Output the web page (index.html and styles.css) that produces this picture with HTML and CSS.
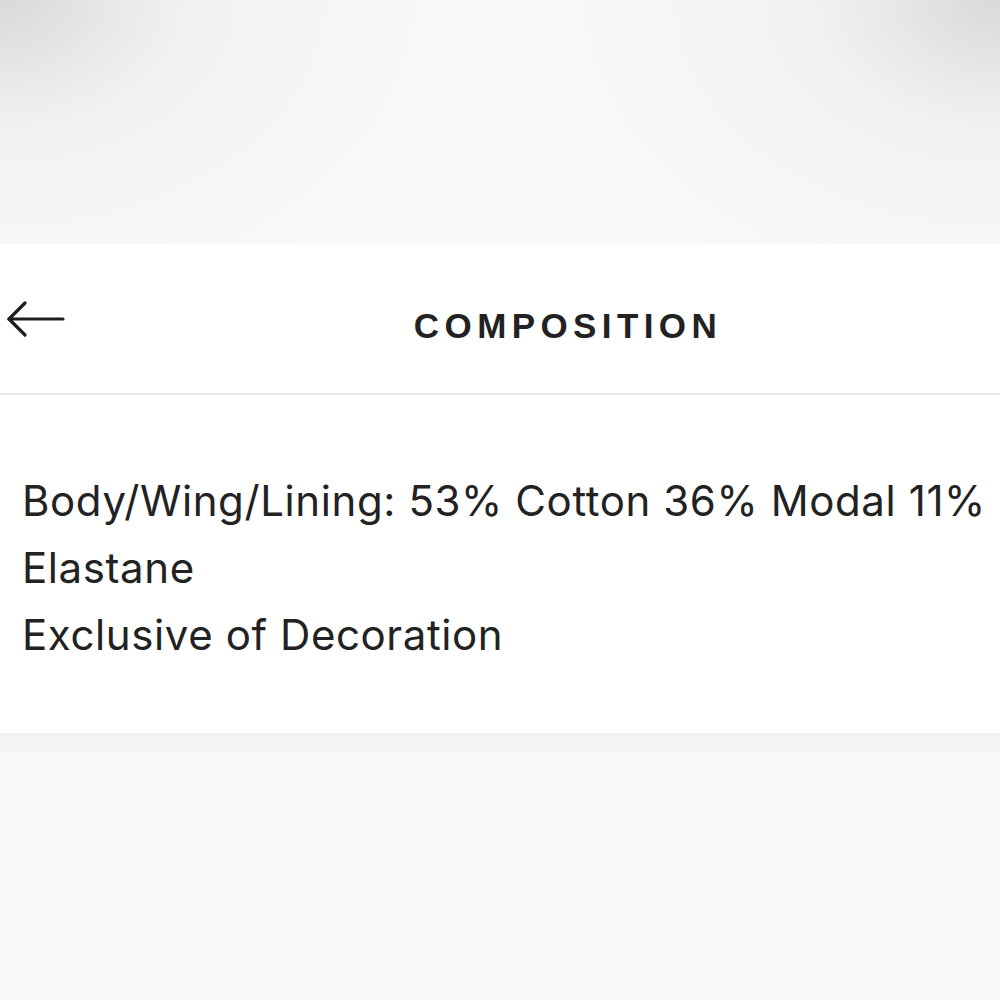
FILE: index.html
```html
<!DOCTYPE html>
<html lang="en">
<head>
<meta charset="utf-8">
<title>Composition</title>
<link rel="stylesheet" href="styles.css">
</head>
<body>
<div class="top-backdrop"></div>
<section class="sheet">
  <header class="sheet-header">
    <button class="back-btn" aria-label="Back">
      <svg width="60" height="40" viewBox="0 0 60 40" fill="none" stroke="#1e1e1e" stroke-width="3.2" stroke-linecap="round" stroke-linejoin="round">
        <path d="M2 20 H56"/>
        <path d="M18 4 L2 20 L18 36"/>
      </svg>
    </button>
    <h1 class="title">COMPOSITION</h1>
  </header>
  <div class="sheet-body">
    <p class="line">Body/Wing/Lining: 53% Cotton 36% Modal 11% Elastane</p>
    <p class="line">Exclusive of Decoration</p>
  </div>
</section>
<div class="bottom-shadow"></div>
<div class="bottom-backdrop"></div>
</body>
</html>
```

FILE: styles.css
```css
html, body {
  margin: 0;
  padding: 0;
}
body {
  width: 1000px;
  height: 1000px;
  overflow: hidden;
  background: #f9f9f9;
  font-family: Inter, "Liberation Sans", sans-serif;
  display: flex;
  flex-direction: column;
}
.top-backdrop {
  height: 244px;
  flex: none;
  background:
    radial-gradient(ellipse 460px 320px at 0 0, #d9d9d9 0%, rgba(238,238,238,0.7) 40%, rgba(249,249,249,0) 100%),
    radial-gradient(ellipse 460px 320px at 100% 0, #d9d9d9 0%, rgba(238,238,238,0.7) 40%, rgba(249,249,249,0) 100%),
    #f9f9f9;
}
.sheet {
  background: #ffffff;
  flex: none;
}
.sheet-header {
  height: 149px;
  border-bottom: 2px solid #e7e7e7;
  display: flex;
  align-items: center;
  justify-content: center;
  position: relative;
}
.back-btn {
  position: absolute;
  left: 7px;
  top: 55px;
  padding: 0;
  margin: 0;
  border: 0;
  background: transparent;
  width: 60px;
  height: 40px;
  display: block;
}
.back-btn svg {
  display: block;
}
.title {
  margin: 0;
  padding-top: 14px;
  padding-left: 136px;
  font-family: "Liberation Sans", Arial, sans-serif;
  font-weight: 700;
  font-size: 35px;
  letter-spacing: 5.4px;
  color: #222222;
}
.sheet-body {
  padding: 72px 8px 58px 22px;
  height: 338px;
  box-sizing: border-box;
}
.line {
  margin: 0;
  font-size: 42px;
  letter-spacing: 0.6px;
  line-height: 67px;
  color: #222222;
}
.bottom-shadow {
  height: 20px;
  flex: none;
  background: linear-gradient(#f1f1f1, #f6f6f6);
}
.bottom-backdrop {
  flex: 1;
  background: #f9f9f9;
}
```
